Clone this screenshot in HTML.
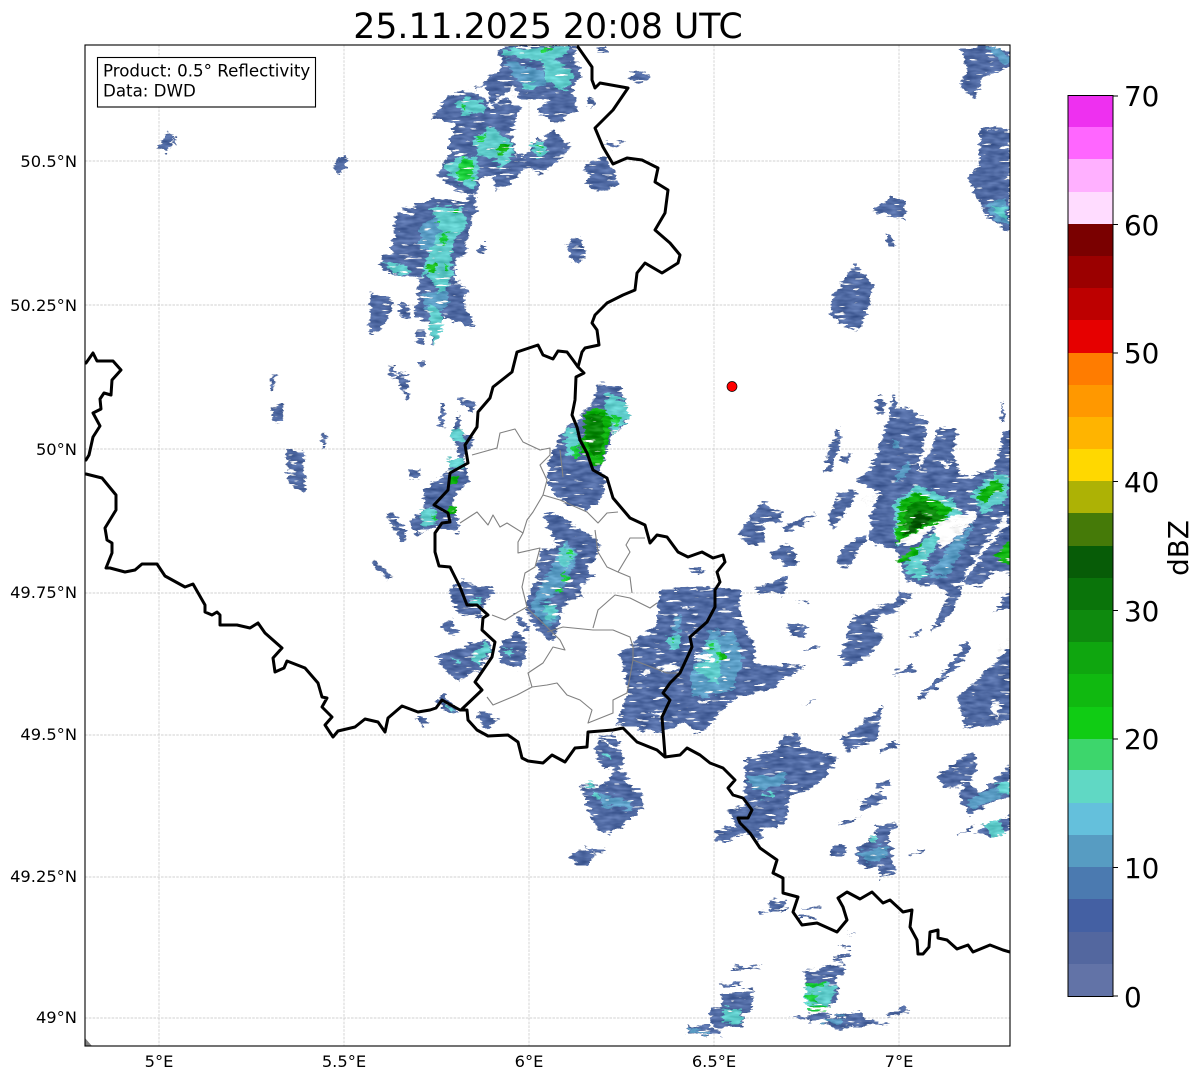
<!DOCTYPE html>
<html><head><meta charset="utf-8"><title>Radar</title>
<style>
html,body{margin:0;padding:0;background:#fff;width:1202px;height:1081px;overflow:hidden}
svg{display:block}
text{font-family:"DejaVu Sans","Liberation Sans",sans-serif;fill:#000}
.a{fill:#506aa3}.b{fill:#4c7ab0}.m{fill:#5a9cc4}.c{fill:#5fcccb}.g{fill:#1ccf3c}.h{fill:#10b410}.d{fill:#0b8a0b}.e{fill:#075c07}.w{fill:#fff}
.b1{fill:none;stroke:#000;stroke-width:3;stroke-linejoin:round;stroke-linecap:round}
.b2{fill:none;stroke:#808080;stroke-width:1.1;stroke-linejoin:round}
.gr{stroke:#c4c4c4;stroke-width:.7;stroke-dasharray:2.6 1.2}
.tk{font-size:16.3px}
.cb{font-size:27.8px}
</style></head><body>
<svg width="1202" height="1081" viewBox="0 0 1202 1081" xmlns="http://www.w3.org/2000/svg">
<defs>
<clipPath id="map"><rect x="85" y="45" width="925" height="1001"/></clipPath>
<filter id="r" filterUnits="userSpaceOnUse" x="85" y="45" width="925" height="1001" color-interpolation-filters="sRGB">
<feTurbulence type="fractalNoise" baseFrequency="0.09 0.3" numOctaves="3" seed="4" result="n"/>
<feDisplacementMap in="SourceGraphic" in2="n" scale="11" xChannelSelector="R" yChannelSelector="G" result="disp"/>
<feTurbulence type="fractalNoise" baseFrequency="0.06 0.3" numOctaves="2" seed="11" result="n2"/>
<feColorMatrix in="n2" type="matrix" values="0 0 0 0 0 0 0 0 0 0 0 0 0 0 0 20 0 0 0 -14" result="holes"/>
<feComposite in="disp" in2="holes" operator="out" result="cut"/>
<feTurbulence type="fractalNoise" baseFrequency="0.08 0.25" numOctaves="2" seed="23" result="n3"/>
<feColorMatrix in="n3" type="matrix" values="1 0 0 0 0 1 0 0 0 0 1 0 0 0 0 0 0 0 0 1" result="grey"/>
<feComposite in="cut" in2="grey" operator="arithmetic" k1="0" k2="1" k3=".3" k4="-.15" result="mott"/>
<feComposite in="mott" in2="cut" operator="in"/>
</filter>
</defs>
<rect width="1202" height="1081" fill="#fff"/>

<text x="548" y="38" text-anchor="middle" style="font-size:34.7px">25.11.2025 20:08 UTC</text>

<g class="gr">
<line x1="159" y1="45" x2="159" y2="1046"/><line x1="344" y1="45" x2="344" y2="1046"/><line x1="529" y1="45" x2="529" y2="1046"/><line x1="714" y1="45" x2="714" y2="1046"/><line x1="899" y1="45" x2="899" y2="1046"/>
<line x1="85" y1="161" x2="1010" y2="161"/><line x1="85" y1="305" x2="1010" y2="305"/><line x1="85" y1="449" x2="1010" y2="449"/><line x1="85" y1="593" x2="1010" y2="593"/><line x1="85" y1="735" x2="1010" y2="735"/><line x1="85" y1="877" x2="1010" y2="877"/><line x1="85" y1="1018" x2="1010" y2="1018"/>
</g>

<g clip-path="url(#map)">
<g filter="url(#r)">
<!-- zoom-1 region -->
<g transform="translate(340,40) scale(.33333)">
<polygon class="a" points="470,40 490,18 715,18 700,55 730,100 695,140 712,210 640,250 592,212 625,175 545,180 520,140 455,195 435,135 400,150 450,110 480,90 490,60"/>
<polygon class="a" points="272,235 330,165 390,150 450,190 505,180 545,205 530,240 510,280 530,340 555,350 580,310 640,268 690,320 670,350 600,400 560,380 500,440 465,450 460,400 420,420 410,470 345,450 290,400 330,340 330,295 350,250 300,240"/>
<polygon class="a" points="170,520 290,470 350,490 400,470 410,500 375,620 385,640 345,660 345,720 385,750 370,790 405,860 380,860 310,830 300,880 280,920 265,850 225,825 240,720 210,710 150,700 120,680 130,650 155,640"/>
<polygon class="a" points="90,760 160,780 155,810 120,875 82,875 95,820"/>
<polygon class="a" points="180,790 210,800 210,838 180,835"/>
<polygon class="a" points="232,865 252,870 255,915 230,912"/>
<polygon class="a" points="740,375 790,355 830,410 835,440 780,455 735,430 750,410 730,385"/>
<polygon class="a" points="680,620 695,595 735,620 715,670 700,665"/>
<polygon class="a" points="745,170 770,175 760,200 740,195"/>
<polygon class="a" points="790,315 860,300 820,322"/>
<polygon class="a" points="860,120 890,90 925,105 920,125"/>
<polygon class="a" points="410,630 425,610 440,625 425,640"/>
<polygon class="a" points="145,975 165,980 160,1010 200,1000 200,1020 170,1020"/>
<polygon class="a" points="240,965 255,965 252,980 240,980"/>
<polygon class="a" points="0,350 20,360 5,395 0,395"/>
<polygon class="a" points="770,28 802,18 800,28 772,36"/>
<polygon class="m" points="500,60 560,80 610,90 620,130 560,150 520,110"/>
<polygon class="m" points="240,560 290,530 330,560 295,630 240,630"/>
<polygon class="m" points="250,760 320,750 330,790 300,820 255,810"/>
<polygon class="c" points="490,30 690,20 680,45 640,60 700,100 680,150 620,130 610,70 540,50 490,40"/>
<polygon class="c" points="345,190 380,170 430,190 440,215 370,225"/>
<polygon class="c" points="400,290 450,260 510,300 525,340 480,390 470,360 420,350 400,310"/>
<polygon class="c" points="340,360 400,345 420,380 400,450 345,420 310,380"/>
<polygon class="c" points="565,310 610,305 630,340 590,350"/>
<polygon class="c" points="270,500 360,500 385,550 340,600 330,650 340,700 320,750 300,760 260,700 240,720 265,650 300,570"/>
<polygon class="c" points="125,660 200,680 210,700 160,700"/>
<polygon class="c" points="265,790 300,800 310,870 285,915 265,860"/>
<polygon class="c" points="550,130 590,130 580,155 550,150"/>
<polygon class="g" points="610,25 640,20 625,35 600,38"/>
<polygon class="g" points="410,290 440,280 430,300 410,300"/>
<polygon class="h" points="475,318 505,312 500,340 470,340"/>
<polygon class="g" points="345,405 375,350 400,370 395,420 360,420"/>
<polygon class="g" points="335,512 360,512 350,527"/>
<polygon class="g" points="283,545 300,538 298,552"/>
<polygon class="g" points="300,600 315,575 325,585 310,615"/>
<polygon class="h" points="260,680 290,670 285,700 262,695"/>
<polygon class="g" points="318,670 332,680 320,700"/>
<polygon class="g" points="365,200 380,195 370,215"/>
<polygon class="g" points="590,315 605,320 598,335"/>
<polygon class="w" points="510,150 530,148 520,170"/>
<polygon class="w" points="440,195 465,190 455,212"/>
</g>
<!-- zoom-2 region -->
<g transform="translate(380,370) scale(.33333)">
<polygon class="a" points="20,430 45,440 85,500 65,515"/>
<polygon class="a" points="90,455 135,415 130,360 200,305 240,260 215,190 235,130 250,190 280,210 250,270 270,330 240,360 215,400 240,490 190,475 170,470 110,495"/>
<polygon class="a" points="235,85 290,100 280,120 240,100"/>
<polygon class="a" points="180,100 195,100 190,175 175,160"/>
<polygon class="a" points="50,5 80,10 85,85 70,50"/>
<polygon class="a" points="85,298 120,295 115,325 92,330"/>
<polygon class="a" points="510,260 560,170 590,160 640,90 650,45 720,50 750,140 720,180 700,170 680,260 660,300 680,330 660,390 620,420 560,400 510,360 500,320"/>
<polygon class="c" points="555,175 590,175 600,260 560,260"/>
<polygon class="c" points="680,60 740,100 750,140 700,190 680,130"/>
<polygon class="c" points="210,180 250,170 255,220 220,210"/>
<polygon class="c" points="120,420 165,410 170,460 130,470"/>
<polygon class="c" points="200,270 250,265 250,290 205,300"/>
<polygon class="h" points="600,240 620,125 670,110 695,150 670,280 640,280"/>
<polygon class="d" points="612,135 665,130 668,250 640,258 612,200"/>
<polygon class="g" points="575,225 595,225 600,265 575,260"/>
<polygon class="g" points="695,130 720,140 715,170 695,160"/>
<polygon class="h" points="208,320 235,320 230,345 205,345"/>
<polygon class="h" points="205,410 230,410 228,435 205,430"/>
<polygon class="g" points="155,435 170,435 165,452"/>
<polygon class="a" points="490,430 530,430 650,510 660,530 620,600 645,620 600,640 610,680 560,690 540,760 520,810 480,790 440,730 445,680 470,620 480,540 530,530"/>
<polygon class="m" points="555,510 590,550 570,630 540,670 470,700 520,700 545,740 500,770 450,710"/>
<polygon class="c" points="550,520 585,555 560,600 530,560"/>
<polygon class="c" points="490,700 530,705 530,745 500,750"/>
<polygon class="g" points="558,540 580,548 575,560 560,555"/>
<polygon class="g" points="545,600 570,630 560,640 545,620"/>
<polygon class="g" points="528,660 545,655 545,672 530,672"/>
<polygon class="a" points="215,650 250,630 285,650 340,650 345,670 300,710 300,740 250,735 215,700"/>
<polygon class="a" points="180,770 210,745 235,790 220,800"/>
<polygon class="a" points="165,860 270,820 330,810 340,840 300,900 235,935 190,890"/>
<polygon class="a" points="360,830 410,780 445,830 420,895 360,880"/>
<polygon class="a" points="165,980 190,970 240,1030 200,1030"/>
<polygon class="a" points="110,1045 130,1040 150,1060 130,1075"/>
<polygon class="a" points="300,1020 360,1050 320,1075 285,1040"/>
<polygon class="a" points="405,730 450,770 430,780 405,750"/>
<polygon class="a" points="930,600 970,590 965,615 935,610"/>
<polygon class="c" points="270,690 310,680 290,710"/>
<polygon class="c" points="210,860 240,870 230,880"/>
<polygon class="c" points="270,860 310,820 340,830 300,890"/>
<polygon class="c" points="370,840 400,840 390,860"/>
<polygon class="c" points="185,990 230,1025 210,1025"/>
<polygon class="a" points="720,850 830,770 840,660 1000,650 1080,660 1080,970 1000,1050 960,1090 920,1060 820,1090 710,1060 745,960"/>
<polygon class="a" points="650,1100 700,1090 725,1125 690,1125"/>
<polygon class="a" points="650,1150 720,1170 705,1200 660,1185"/>
<polygon class="m" points="880,740 905,740 900,790 880,790"/>
<polygon class="m" points="990,780 1060,780 1080,900 1050,970 940,980 930,920 960,860"/>
<polygon class="c" points="975,810 1040,820 1060,880 1010,940 940,900 985,860"/>
<polygon class="c" points="860,800 900,790 900,830 870,840"/>
<polygon class="g" points="1010,850 1040,855 1035,875 1010,870"/>
<polygon class="g" points="988,825 1000,825 1000,840 990,838"/>
<polygon class="g" points="870,800 885,805 880,812"/>
<polygon class="w" points="945,848 1000,860 1000,875 940,865"/>
<polygon class="w" points="960,990 990,990 985,1000 955,1000"/>
<polygon class="w" points="830,890 890,880 895,895 850,905"/>
<polygon class="w" points="780,900 810,905 795,920"/>
<polygon class="w" points="800,1030 850,1028 850,1045"/>
<polygon class="w" points="900,708 930,712 925,720"/>
</g>
<!-- zoom-3 region -->
<g transform="translate(720,390) scale(.33333)">
<polygon class="a" points="450,460 450,380 480,310 410,270 460,230 475,180 505,90 520,10 530,50 575,60 625,100 610,180 590,240 630,190 655,110 710,115 700,190 720,250 750,260 830,230 850,120 885,120 885,560 820,540 780,590 730,580 770,510 700,620 640,580 600,590 555,560 540,510 530,480"/>
<polygon class="a" points="325,380 355,310 410,300 400,330 340,420"/>
<polygon class="a" points="355,480 440,430 440,450 385,525 360,530"/>
<polygon class="a" points="310,250 330,170 355,110 365,130 345,205 335,250"/>
<polygon class="a" points="365,205 395,185 380,225"/>
<polygon class="a" points="85,390 130,335 190,375 170,400 130,390 135,460 90,470 50,430"/>
<polygon class="a" points="175,415 285,370 240,410 195,425"/>
<polygon class="a" points="150,490 210,460 235,520 200,530"/>
<polygon class="a" points="100,600 205,555 190,610 130,610"/>
<polygon class="a" points="235,635 270,630 265,645"/>
<polygon class="a" points="385,690 470,650 520,640 540,600 575,620 530,660 480,680 450,700 490,745 430,810 380,830 355,800 385,750"/>
<polygon class="a" points="515,850 575,820 582,845 525,858"/>
<polygon class="a" points="630,725 690,610 730,590 690,680"/>
<polygon class="a" points="590,920 660,860 740,755 755,780 700,840 610,930"/>
<polygon class="a" points="730,1010 715,920 800,840 885,760 885,980 820,1010"/>
<polygon class="a" points="820,670 885,580 885,650"/>
<polygon class="a" points="565,745 610,710 600,730"/>
<polygon class="a" points="0,600 40,600 70,700 105,770 100,820 250,830 150,900 0,930"/>
<polygon class="a" points="205,705 260,710 250,745 210,740"/>
<polygon class="a" points="250,775 300,765 300,775 255,780"/>
<polygon class="a" points="240,945 300,925 290,935"/>
<polygon class="a" points="370,1050 420,1000 490,950 470,1050"/>
<polygon class="a" points="845,30 855,90 840,90"/>
<polygon class="a" points="470,20 500,30 490,70 470,70"/>
<polygon class="a" points="185,1040 240,1035 240,1052"/>
<polygon class="m" points="520,150 540,150 535,175 515,170"/>
<polygon class="m" points="520,270 565,210 570,240 545,270"/>
<polygon class="m" points="0,740 40,720 70,800 40,900 0,910"/>
<polygon class="c" points="520,340 590,285 700,330 725,370 700,400 650,400 530,470"/>
<polygon class="c" points="550,535 610,450 670,420 650,470 610,520 630,560 590,570"/>
<polygon class="c" points="750,310 820,250 865,260 860,330 790,370"/>
<polygon class="m" points="620,560 700,450 760,400 730,480 680,560"/>
<polygon class="h" points="528,460 540,330 600,310 700,360 670,390 610,420"/>
<polygon class="h" points="528,515 570,480 610,460 590,490 550,520"/>
<polygon class="h" points="770,320 830,265 848,295 790,340"/>
<polygon class="h" points="820,500 870,450 880,530 840,510"/>
<polygon class="d" points="545,445 565,340 610,330 675,380 610,410"/>
<polygon class="e" points="550,435 595,360 635,395 590,420"/>
<polygon class="h" points="0,790 20,790 20,810 0,810"/>
<polygon class="w" points="530,458 600,420 650,395 690,380 770,362 770,385 720,430 690,455 665,475 640,410 600,450 560,470"/>
<polygon class="w" points="730,555 855,378 862,400 770,520 745,560"/>
<polygon class="w" points="655,210 690,215 690,228 655,225"/>
<polygon class="w" points="430,320 480,305 440,350"/>
<polygon class="w" points="810,950 840,930 835,985"/>
<polygon class="w" points="830,780 870,740 870,760 835,795"/>
</g>
<!-- zoom-7 region -->
<g transform="translate(560,730) scale(.33333)">
<polygon class="a" points="110,30 185,65 190,100 165,110 200,130 205,165 240,180 250,240 215,265 185,290 155,310 115,300 85,240 60,170 115,170 150,145 170,110 110,70"/>
<polygon class="a" points="35,365 80,365 110,375 80,410 35,395"/>
<polygon class="a" points="70,350 140,365 100,370"/>
<polygon class="a" points="555,90 650,60 665,20 720,15 720,50 800,70 830,85 800,135 760,170 690,200 675,285 610,300 600,330 560,310 470,340 470,300 535,290 500,240 555,230 555,190"/>
<polygon class="a" points="895,215 960,185 980,205 910,240"/>
<polygon class="a" points="840,280 905,258 900,265 842,288"/>
<polygon class="a" points="945,160 990,150 990,165 950,175"/>
<polygon class="a" points="840,20 950,0 955,20 860,65"/>
<polygon class="a" points="960,60 1010,30 1012,45 960,70"/>
<polygon class="a" points="1135,135 1200,95 1240,60 1250,120 1230,155 1260,190 1350,105 1350,205 1320,205 1230,255 1200,200 1210,165 1150,175"/>
<polygon class="a" points="1270,285 1350,255 1350,295 1300,325 1250,310"/>
<polygon class="a" points="810,350 855,345 860,375 812,378"/>
<polygon class="a" points="890,360 950,310 945,285 1015,280 985,320 1005,420 960,445 955,410 925,415 895,400"/>
<polygon class="a" points="625,515 675,510 680,540 625,545"/>
<polygon class="a" points="598,545 622,543 622,550 598,552"/>
<polygon class="a" points="730,531 788,532 788,537 730,537"/>
<polygon class="a" points="710,560 765,558 765,565 710,566"/>
<polygon class="a" points="730,725 850,695 855,730 830,735 835,820 745,840 735,760"/>
<polygon class="a" points="745,850 805,845 810,860 780,870 750,880"/>
<polygon class="a" points="780,870 905,845 915,870 985,880 900,890 820,895"/>
<polygon class="a" points="485,760 545,755 545,770 490,770"/>
<polygon class="a" points="485,790 578,780 578,845 550,850 550,890 480,895 450,880 450,840 485,830"/>
<polygon class="a" points="385,885 450,890 480,905 480,920 450,915 380,910"/>
<polygon class="a" points="515,712 605,708 575,718 520,720"/>
<polygon class="a" points="680,860 745,855 745,870"/>
<polygon class="a" points="980,850 1040,830 1045,845 985,860"/>
<polygon class="a" points="815,683 870,670 870,680 815,690"/>
<polygon class="a" points="840,650 870,645 870,655"/>
<polygon class="a" points="860,605 890,605 885,612"/>
<polygon class="a" points="1050,375 1100,358 1100,365 1052,380"/>
<polygon class="a" points="1195,315 1240,285 1240,295 1198,318"/>
<polygon class="m" points="120,190 210,210 215,240 125,225"/>
<polygon class="m" points="560,140 680,130 660,175 580,180"/>
<polygon class="m" points="900,365 980,345 985,385 920,400"/>
<polygon class="m" points="1220,210 1320,170 1330,195 1230,240"/>
<polygon class="m" points="780,870 860,860 840,880 785,880"/>
<polygon class="m" points="385,895 450,900 448,912 385,908"/>
<polygon class="c" points="120,70 150,75 155,90"/>
<polygon class="c" points="70,155 105,165 90,172"/>
<polygon class="c" points="100,190 120,190 118,210 100,205"/>
<polygon class="c" points="600,190 650,190 640,205 600,200"/>
<polygon class="c" points="1310,160 1350,150 1350,190 1320,190"/>
<polygon class="c" points="1270,285 1320,265 1335,315 1300,320"/>
<polygon class="c" points="485,835 545,840 545,880 490,880"/>
<polygon class="c" points="735,765 795,755 830,770 805,830 740,835"/>
<polygon class="c" points="930,315 950,310 950,340 930,335"/>
<polygon class="g" points="735,765 795,755 790,770 740,770"/>
<polygon class="g" points="740,830 805,825 800,835 745,838"/>
<polygon class="g" points="740,790 770,790 768,815 745,815"/>
</g>
<!-- zoom-8 region -->
<g transform="translate(80,340) scale(.33333)">
<polygon class="a" points="575,102 588,102 585,150 575,150"/>
<polygon class="a" points="575,200 610,195 608,245 585,245"/>
<polygon class="a" points="725,280 735,280 738,320 728,320"/>
<polygon class="a" points="615,320 650,335 672,335 675,450 645,450 625,425"/>
<polygon class="a" points="985,390 1020,385 1015,415 995,420"/>
<polygon class="a" points="918,525 935,520 985,595 965,605"/>
<polygon class="a" points="880,655 935,710 925,718 885,690"/>
<polygon class="a" points="925,75 945,75 945,110 930,110"/>
<polygon class="a" points="955,95 980,100 985,180 975,175 955,130"/>
<polygon class="a" points="1020,65 1035,65 1032,80 1022,80"/>
</g>
<!-- NE corner and isolated -->
<polygon class="a" points="960,48 985,45 1010,50 1010,68 985,75 975,98 957,88 968,70"/>
<polygon class="m" points="985,47 1000,47 1010,60 1005,65"/>
<polygon class="a" points="980,130 1010,128 1010,232 985,215 968,180 980,165"/>
<polygon class="m" points="985,205 1005,198 1010,225 995,220"/>
<polygon class="c" points="990,205 1005,208 1008,220 997,215"/>
<polygon class="a" points="872,212 890,197 906,200 903,220 885,215"/>
<polygon class="a" points="885,235 892,235 895,246 888,246"/>
<polygon class="a" points="832,298 855,265 875,285 860,330 840,325 830,315"/>
<polygon class="a" points="158,148 168,131 175,135 167,153"/>
<polygon class="a" points="174,138 178,136 172,148"/>
<polygon class="a" points="333,166 345,155 347,165 338,173"/>
<polygon class="a" points="570,240 582,238 585,258 573,262"/>
</g>
<polygon points="85,1038 92,1046 85,1046" fill="#808080"/>
</g>

<g clip-path="url(#map)">
<path class="b2" d="M472 455L497 448L500 433L515 429L523 442L540 450L550 448L550 455L540 465L547 480L543 495L533 512L527 520L523 533L518 542L518 553L540 548L535 567L525 573L522 587L527 607L518 612L505 620L492 615"/>
<path class="b2" d="M460 523L477 512L488 525L493 515L500 527L507 523L523 533"/>
<path class="b2" d="M527 608L547 627L560 640L565 650L553 647L543 663L528 673L532 687L517 695L493 705L487 697"/>
<path class="b2" d="M532 687L547 685L557 683L567 695L580 700L592 710L588 723L603 717L613 713L613 700L627 693L633 660L633 647L630 637L613 630L593 630L563 627L547 632"/>
<path class="b2" d="M593 628L598 610L615 595L630 598L650 608L657 603"/>
<path class="b2" d="M632 593L630 577L618 572L607 567L598 552L595 530"/>
<path class="b2" d="M543 495L560 500L587 512L598 523L607 513L618 512"/>
<path class="b2" d="M618 572L630 552L626 545L630 538L645 538"/>
<path class="b2" d="M633 660L667 673L680 673"/>
<path class="b2" d="M563 477L560 450"/>

<path class="b1" d="M86 363L93 353L97 361L113 361L121 370L112 380L111 395L104 393L100 399L101 409L93 413L100 426L93 437L89 455L86 460"/>
<path class="b1" d="M86 474L102 478L116 495L116 510L105 528L107 540L112 543L112 553L106 568L110 568L125 572L135 570L142 564L157 564L165 576L185 587L193 584L205 605L205 612L212 615L217 612L220 615L220 625L237 625L250 628L258 623L265 633L282 648L273 658L275 672L284 668L287 661L305 668L318 683L322 697L327 698L322 707L332 717L325 725L333 737L338 731L355 727L365 719L378 722L385 732L388 718L402 706L418 712L430 710L436 708L442 700L460 710L467 710L468 720L477 730L488 736L508 735L518 742L522 758L528 761L543 763L552 755L565 762L575 748L587 747L588 732L613 730L623 728L637 742L657 750L665 757L680 755L687 748L700 755L710 763L723 768L735 780L728 788L733 795L743 798L752 810L748 818L738 818L740 823L750 833L760 848L777 860L773 873L783 878L783 893L798 897L793 912L802 925L817 923L837 932L847 920L843 907L838 898L847 892L860 899L872 892L883 903L890 900L903 912L912 910L910 927L917 940L918 954L923 954L929 947L930 932L938 930L938 938L947 940L957 949L968 945L973 952L990 945L1003 950L1010 952"/>
<path class="b1" d="M462 709L482 690L475 682L492 657L495 642L482 630L483 618L488 615L477 605L467 605L460 587L450 567L439 566L435 552L435 533L442 523L450 522L448 513L434 505L448 490L450 473L468 463L465 445L477 427L478 412L490 398L493 387L512 372L517 352L538 345L543 355L553 359L558 351L567 352L573 360L578 367L584 373L576 377L575 400L572 415L577 427L580 440L587 453L593 470L607 478L613 498L630 518L645 525L650 543L657 535L667 537L678 552L688 557L702 552L713 558L723 555L725 562L717 572L720 582L715 590L715 607L707 622L690 637L692 647L680 673L670 683L663 693L670 700L662 717L665 755"/>
<path class="b1" d="M578 367L582 352L585 348L599 345L597 330L592 323L595 315L607 303L623 295L635 290L637 273L645 263L662 273L678 263L680 255L670 243L655 230L665 213L668 190L655 182L658 168L642 160L627 158L613 164L603 147L595 128L613 110L628 88L600 83L595 88L592 80L592 67L578 47"/>
</g>
<circle cx="732" cy="386.5" r="5" fill="#f00" stroke="#000" stroke-width=".7"/>

<rect x="85" y="45" width="925" height="1001" fill="none" stroke="#000" stroke-width="1.1"/>

<rect x="97.5" y="57.5" width="218" height="49.5" fill="#fff" stroke="#000" stroke-width="1.1"/>
<text x="103" y="76.5" style="font-size:16.67px">Product: 0.5° Reflectivity</text>
<text x="103" y="96.5" style="font-size:16.67px">Data: DWD</text>

<g class="tk" text-anchor="end">
<text x="77" y="167" class="tk">50.5°N</text>
<text x="77" y="311" class="tk">50.25°N</text>
<text x="77" y="455" class="tk">50°N</text>
<text x="77" y="598" class="tk">49.75°N</text>
<text x="77" y="740" class="tk">49.5°N</text>
<text x="77" y="882" class="tk">49.25°N</text>
<text x="77" y="1023" class="tk">49°N</text>
</g>
<g text-anchor="middle">
<text x="159" y="1067" class="tk">5°E</text>
<text x="344" y="1067" class="tk">5.5°E</text>
<text x="529" y="1067" class="tk">6°E</text>
<text x="714" y="1067" class="tk">6.5°E</text>
<text x="899" y="1067" class="tk">7°E</text>
</g>

<!-- colorbar -->
<g shape-rendering="crispEdges">
<rect x="1068" y="95.5" width="45" height="32.5" fill="#ee30f0"/>
<rect x="1068" y="127" width="45" height="32.5" fill="#ff66ff"/>
<rect x="1068" y="159" width="45" height="33" fill="#ffb0ff"/>
<rect x="1068" y="192" width="45" height="32" fill="#ffdcff"/>
<rect x="1068" y="224" width="45" height="32" fill="#7a0000"/>
<rect x="1068" y="256" width="45" height="32" fill="#9b0000"/>
<rect x="1068" y="288" width="45" height="32" fill="#bd0000"/>
<rect x="1068" y="320" width="45" height="33" fill="#e60000"/>
<rect x="1068" y="353" width="45" height="32" fill="#ff7c00"/>
<rect x="1068" y="385" width="45" height="32" fill="#ff9800"/>
<rect x="1068" y="417" width="45" height="32" fill="#ffb400"/>
<rect x="1068" y="449" width="45" height="32" fill="#ffd800"/>
<rect x="1068" y="481" width="45" height="32" fill="#adb205"/>
<rect x="1068" y="513" width="45" height="33" fill="#457a08"/>
<rect x="1068" y="546" width="45" height="32" fill="#075c07"/>
<rect x="1068" y="578" width="45" height="32" fill="#0a740a"/>
<rect x="1068" y="610" width="45" height="32" fill="#0e8a0e"/>
<rect x="1068" y="642" width="45" height="32" fill="#0fa60f"/>
<rect x="1068" y="674" width="45" height="33" fill="#10b910"/>
<rect x="1068" y="707" width="45" height="32" fill="#10cc14"/>
<rect x="1068" y="739" width="45" height="31" fill="#3dd66c"/>
<rect x="1068" y="770" width="45" height="33" fill="#60d8c4"/>
<rect x="1068" y="803" width="45" height="32" fill="#64c0dc"/>
<rect x="1068" y="835" width="45" height="32" fill="#579cc2"/>
<rect x="1068" y="867" width="45" height="32" fill="#4b7ab0"/>
<rect x="1068" y="899" width="45" height="33" fill="#4460a3"/>
<rect x="1068" y="932" width="45" height="32" fill="#53679f"/>
<rect x="1068" y="964" width="45" height="32" fill="#6273a7"/>
</g>
<rect x="1068" y="95.5" width="45" height="901" fill="none" stroke="#000" stroke-width="1"/>
<g stroke="#000" stroke-width="1">
<line x1="1113" y1="96" x2="1118" y2="96"/><line x1="1113" y1="224.5" x2="1118" y2="224.5"/><line x1="1113" y1="353" x2="1118" y2="353"/><line x1="1113" y1="481.5" x2="1118" y2="481.5"/><line x1="1113" y1="610.5" x2="1118" y2="610.5"/><line x1="1113" y1="739" x2="1118" y2="739"/><line x1="1113" y1="867.5" x2="1118" y2="867.5"/><line x1="1113" y1="996" x2="1118" y2="996"/>
</g>
<text x="1124" y="106" class="cb">70</text>
<text x="1124" y="235" class="cb">60</text>
<text x="1124" y="363" class="cb">50</text>
<text x="1124" y="492" class="cb">40</text>
<text x="1124" y="621" class="cb">30</text>
<text x="1124" y="749" class="cb">20</text>
<text x="1124" y="878" class="cb">10</text>
<text x="1124" y="1007" class="cb">0</text>
<text transform="translate(1188,548) rotate(-90)" text-anchor="middle" class="cb">dBZ</text>
</svg>
</body></html>
